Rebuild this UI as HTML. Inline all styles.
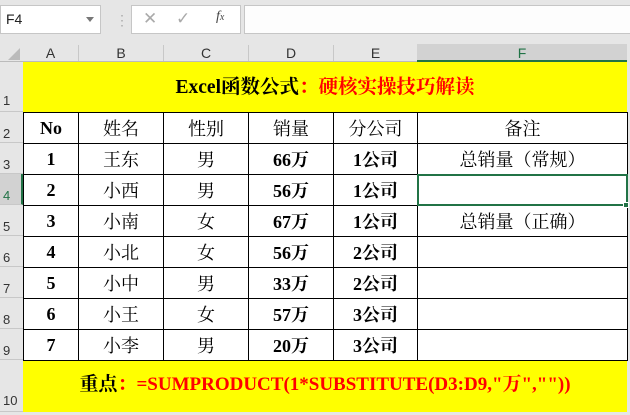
<!DOCTYPE html><html><head><meta charset="utf-8"><style>
*{margin:0;padding:0;box-sizing:border-box}
body{width:630px;height:415px;background:#e6e6e6;position:relative;overflow:hidden;font-family:"Liberation Serif","Noto Serif CJK SC",serif}
.a{position:absolute}
.hd{position:absolute;font-family:"Liberation Sans",sans-serif;font-size:14px;color:#333;text-align:center}
.rh{position:absolute;left:0;width:23px;font-family:"Liberation Sans",sans-serif;font-size:13px;color:#333;text-align:left;padding-left:3px;border-bottom:1px solid #c8c8c8}
table{position:absolute;left:23px;top:112px;border-collapse:collapse;background:#fff}
td{border:1px solid #000;height:31px;text-align:center;font-size:18px;font-weight:bold;color:#000;padding:0}
td.n{font-weight:normal}
</style></head><body>
<div class="a" style="left:0;top:5px;width:101px;height:29px;background:#fff;border:1px solid #c6c6c6"></div>
<div class="a" style="left:6px;top:11px;font:14px 'Liberation Sans',sans-serif;color:#222">F4</div>
<div class="a" style="left:86px;top:17px;width:0;height:0;border-left:4px solid transparent;border-right:4px solid transparent;border-top:5px solid #777"></div>
<div class="a" style="left:115px;top:12px;font:14px sans-serif;color:#aaa">⋮</div>
<div class="a" style="left:131px;top:5px;width:110px;height:29px;background:#fff;border:1px solid #c6c6c6"></div>
<div class="a" style="left:143px;top:9px;font:17px sans-serif;color:#aaa">✕</div>
<div class="a" style="left:176px;top:9px;font:17px sans-serif;color:#aaa">✓</div>
<div class="a" style="left:216px;top:9px;font:italic 14px 'Liberation Serif',serif;color:#444">f<span style="font-size:10px">x</span></div>
<div class="a" style="left:244px;top:5px;width:386px;height:29px;background:#fdfdfd;border:1px solid #c6c6c6;border-right:none"></div>
<div class="a" style="left:0;top:44px;width:627px;height:18px;background:#e6e6e6;border-bottom:1px solid #bbb"></div>
<div class="a" style="left:8px;top:48px;width:0;height:0;border-left:12px solid transparent;border-bottom:12px solid #bbb"></div>
<div class="hd" style="left:23px;top:45px;width:55px">A</div>
<div class="hd" style="left:78px;top:45px;width:85px;border-left:1px solid #c8c8c8">B</div>
<div class="hd" style="left:163px;top:45px;width:85px;border-left:1px solid #c8c8c8">C</div>
<div class="hd" style="left:248px;top:45px;width:85px;border-left:1px solid #c8c8c8">D</div>
<div class="hd" style="left:333px;top:45px;width:84px;border-left:1px solid #c8c8c8">E</div>
<div class="a" style="left:417px;top:44px;width:210px;height:18px;background:#d2d2d2;border-bottom:2px solid #217346"></div>
<div class="hd" style="left:417px;top:45px;width:210px;color:#217346">F</div>
<div class="a" style="left:23px;top:62px;width:604px;height:50px;background:#ff0;text-align:center;line-height:52px;font-size:19.5px;font-weight:bold">Excel函数公式<span style="color:#f00">：硬核实操技巧解读</span></div>
<div class="rh" style="top:62px;height:50px;padding-top:31px">1</div>
<div class="rh" style="top:112px;height:31px;padding-top:14px">2</div>
<div class="rh" style="top:143px;height:31px;padding-top:14px">3</div>
<div class="rh" style="top:174px;height:31px;padding-top:14px;background:#d2d2d2;border-right:2px solid #217346;color:#217346">4</div>
<div class="rh" style="top:205px;height:31px;padding-top:14px">5</div>
<div class="rh" style="top:236px;height:31px;padding-top:14px">6</div>
<div class="rh" style="top:267px;height:31px;padding-top:14px">7</div>
<div class="rh" style="top:298px;height:31px;padding-top:14px">8</div>
<div class="rh" style="top:329px;height:31px;padding-top:14px">9</div>
<div class="rh" style="top:360px;height:52px;padding-top:33px">10</div>
<table>
<colgroup><col style="width:55px"><col style="width:85px"><col style="width:85px"><col style="width:85px"><col style="width:84px"><col style="width:210px"></colgroup>
<tr><td>No</td><td class="n">姓名</td><td class="n">性别</td><td class="n">销量</td><td class="n">分公司</td><td class="n">备注</td></tr>
<tr><td>1</td><td class="n">王东</td><td class="n">男</td><td>66万</td><td>1公司</td><td class="n">总销量（常规）</td></tr>
<tr><td>2</td><td class="n">小西</td><td class="n">男</td><td>56万</td><td>1公司</td><td></td></tr>
<tr><td>3</td><td class="n">小南</td><td class="n">女</td><td>67万</td><td>1公司</td><td class="n">总销量（正确）</td></tr>
<tr><td>4</td><td class="n">小北</td><td class="n">女</td><td>56万</td><td>2公司</td><td></td></tr>
<tr><td>5</td><td class="n">小中</td><td class="n">男</td><td>33万</td><td>2公司</td><td></td></tr>
<tr><td>6</td><td class="n">小王</td><td class="n">女</td><td>57万</td><td>3公司</td><td></td></tr>
<tr><td>7</td><td class="n">小李</td><td class="n">男</td><td>20万</td><td>3公司</td><td></td></tr>
</table>
<div class="a" style="left:417px;top:174px;width:211px;height:32px;border:2px solid #217346"></div>
<div class="a" style="left:623px;top:202px;width:6px;height:6px;background:#217346;border:1px solid #fff"></div>
<div class="a" style="left:23px;top:361px;width:604px;height:51px;background:#ff0;text-align:center;line-height:48px;font-size:19px;font-weight:bold">重点<span style="color:#f00">：=SUMPRODUCT(1*SUBSTITUTE(D3:D9,"万",""))</span></div>
</body></html>
